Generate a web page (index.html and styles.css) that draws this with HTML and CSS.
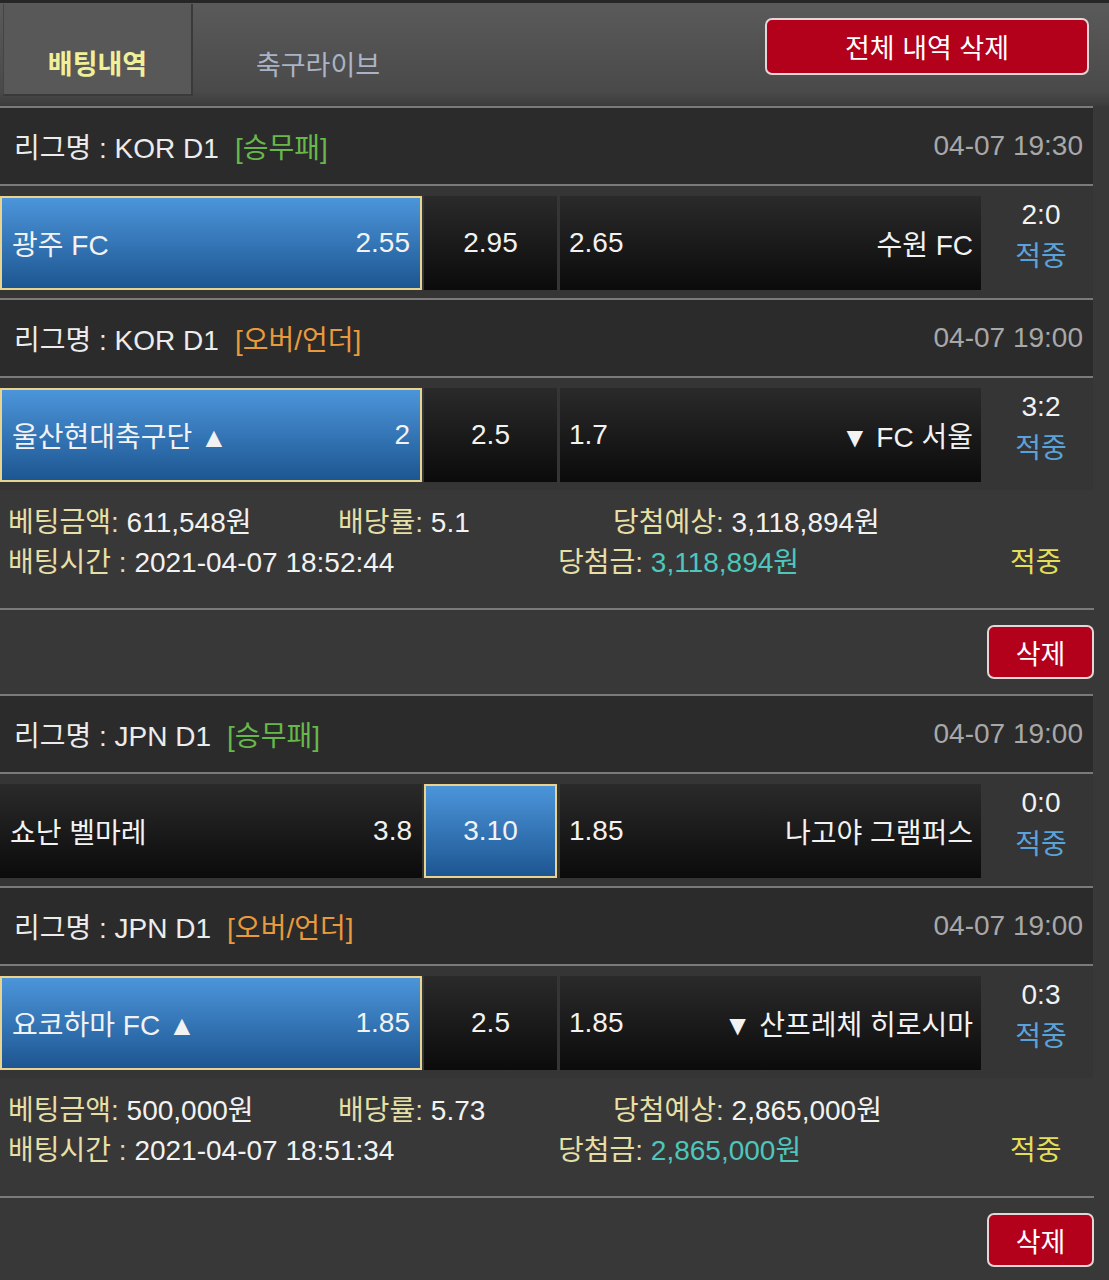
FILE: index.html
```html
<!DOCTYPE html>
<html lang="ko">
<head>
  <meta charset="UTF-8" />
  <meta name="viewport" content="width=device-width, initial-scale=1.0" />
  <title>배팅내역</title>
  <link rel="stylesheet" href="styles.css">
</head>
<body>
  <div class="topbar">
    <div class="tabs">
      <a href="#" class="tab active">배팅내역</a>
      <a href="#" class="tab">축구라이브</a>
    </div>
    <button class="red-btn all-btn">전체 내역 삭제</button>
  </div>

  <div class="list">
    <!-- slip 1 -->
    <div class="slip">
      <div class="league">
        <span>리그명 : KOR D1<span class="type wdl">[승무패]</span></span>
        <span class="time">04-07 19:30</span>
      </div>
      <div class="match">
        <div class="cell home picked"><span>광주 FC</span><span>2.55</span></div>
        <div class="cell draw">2.95</div>
        <div class="cell away"><span>2.65</span><span>수원 FC</span></div>
        <div class="score"><span>2:0</span><span class="hit">적중</span></div>
      </div>
      <div class="league">
        <span>리그명 : KOR D1<span class="type ou">[오버/언더]</span></span>
        <span class="time">04-07 19:00</span>
      </div>
      <div class="match">
        <div class="cell home picked"><span>울산현대축구단 ▲</span><span>2</span></div>
        <div class="cell draw">2.5</div>
        <div class="cell away"><span>1.7</span><span>▼ FC 서울</span></div>
        <div class="score"><span>3:2</span><span class="hit">적중</span></div>
      </div>
      <div class="info">
        <div class="info-row">
          <span class="c1"><span class="lbl">베팅금액:</span> 611,548원</span>
          <span class="c2"><span class="lbl">배당률:</span> 5.1</span>
          <span class="c3"><span class="lbl">당첨예상:</span> 3,118,894원</span>
        </div>
        <div class="info-row">
          <span class="d1"><span class="lbl">배팅시간 :</span> 2021-04-07 18:52:44</span>
          <span class="d2"><span class="lbl">당첨금:</span> <span class="win">3,118,894원</span></span>
          <span class="result">적중</span>
        </div>
      </div>
      <div class="actions">
        <button class="red-btn del-btn">삭제</button>
      </div>
    </div>

    <!-- slip 2 -->
    <div class="slip">
      <div class="league">
        <span>리그명 : JPN D1<span class="type wdl">[승무패]</span></span>
        <span class="time">04-07 19:00</span>
      </div>
      <div class="match">
        <div class="cell home"><span>쇼난 벨마레</span><span>3.8</span></div>
        <div class="cell draw picked">3.10</div>
        <div class="cell away"><span>1.85</span><span>나고야 그램퍼스</span></div>
        <div class="score"><span>0:0</span><span class="hit">적중</span></div>
      </div>
      <div class="league">
        <span>리그명 : JPN D1<span class="type ou">[오버/언더]</span></span>
        <span class="time">04-07 19:00</span>
      </div>
      <div class="match">
        <div class="cell home picked"><span>요코하마 FC ▲</span><span>1.85</span></div>
        <div class="cell draw">2.5</div>
        <div class="cell away"><span>1.85</span><span>▼ 산프레체 히로시마</span></div>
        <div class="score"><span>0:3</span><span class="hit">적중</span></div>
      </div>
      <div class="info">
        <div class="info-row">
          <span class="c1"><span class="lbl">베팅금액:</span> 500,000원</span>
          <span class="c2"><span class="lbl">배당률:</span> 5.73</span>
          <span class="c3"><span class="lbl">당첨예상:</span> 2,865,000원</span>
        </div>
        <div class="info-row">
          <span class="d1"><span class="lbl">배팅시간 :</span> 2021-04-07 18:51:34</span>
          <span class="d2"><span class="lbl">당첨금:</span> <span class="win">2,865,000원</span></span>
          <span class="result">적중</span>
        </div>
      </div>
      <div class="actions">
        <button class="red-btn del-btn">삭제</button>
      </div>
    </div>
  </div>
</body>
</html>
```

FILE: styles.css
```css
body {
  margin: 0;
  background: #383838;
  color: #f2f2f2;
  font-family: "Liberation Sans", "Noto Sans CJK KR", sans-serif;
  font-size: 28px;
}
.topbar {
  display: flex;
  justify-content: space-between;
  height: 103px;
  border-top: 3px solid #262626;
  background: linear-gradient(#5a5a5a, #4a4a4a 85%, #3c3c3c);
}
.tabs {
  display: flex;
  align-items: flex-start;
}
.tab {
  display: flex;
  align-items: center;
  justify-content: center;
  box-sizing: border-box;
  height: 92px;
  padding-top: 26px;
  margin-top: 1px;
  text-decoration: none;
  font-size: 27px;
}
.tab.active {
  width: 190px;
  margin-left: 3px;
  background: #585858;
  border-right: 2px solid #3a3a3a;
  border-bottom: 2px solid #3a3a3a;
  border-left: 1px solid #444;
  color: #f0f09a;
  font-weight: bold;
}
.tab:not(.active) {
  width: 250px;
  color: #aab4c6;
}
.red-btn {
  background: #b3001b;
  color: #fff;
  border: 2px solid #e2d6d6;
  border-radius: 7px;
  font-family: inherit;
  cursor: pointer;
}
.all-btn {
  width: 324px;
  height: 57px;
  margin: 15px 20px 0 0;
  font-size: 27px;
}
.list {
  width: 1093px;
}
.league {
  display: flex;
  justify-content: space-between;
  align-items: center;
  height: 76px;
  padding: 0 10px 0 14px;
  border-top: 2px solid #7a7a7a;
  background: #2b2b2b;
  color: #ececec;
}
.type {
  margin-left: 16px;
}
.type.wdl {
  color: #66b84a;
}
.type.ou {
  color: #e89a3c;
}
.time {
  color: #a8a8a8;
}
.match {
  display: flex;
  align-items: flex-start;
  height: 114px;
  box-sizing: border-box;
  padding-top: 10px;
  border-top: 2px solid #7a7a7a;
  background: #353535;
}
.cell {
  display: flex;
  align-items: center;
  justify-content: space-between;
  box-sizing: border-box;
  height: 94px;
  padding: 0 10px;
  background: linear-gradient(#2a2a2a, #0b0b0b);
}
.cell.home {
  width: 422px;
}
.cell.draw {
  justify-content: center;
  width: 133px;
  margin-left: 2px;
}
.cell.away {
  width: 421px;
  margin-left: 3px;
  padding: 0 8px 0 9px;
}
.cell.picked {
  border: 2px solid #e8d48e;
  background: linear-gradient(#4c95da, #1d5692);
}
.score {
  flex: 1;
  display: flex;
  flex-direction: column;
  justify-content: center;
  align-items: center;
  height: 94px;
  margin-top: -7px;
  padding-left: 8px;
  line-height: 42px;
}
.hit {
  color: #5aa2da;
}
.info {
  height: 118px;
  box-sizing: border-box;
  padding: 13px 0 0 8px;
  line-height: 40px;
}
.info-row {
  display: flex;
}
.lbl {
  color: #e6dfa6;
}
.c1 { width: 330px; }
.c2 { width: 275px; }
.d1 { width: 550px; }
.d2 { width: 452px; }
.win {
  color: #4ec6bc;
}
.result {
  color: #e4de58;
}
.actions {
  display: flex;
  justify-content: flex-end;
  align-items: center;
  height: 84px;
  border-top: 2px solid #7a7a7a;
  margin-right: -1px;
}
.del-btn {
  width: 107px;
  height: 54px;
  font-size: 27px;
}
```
